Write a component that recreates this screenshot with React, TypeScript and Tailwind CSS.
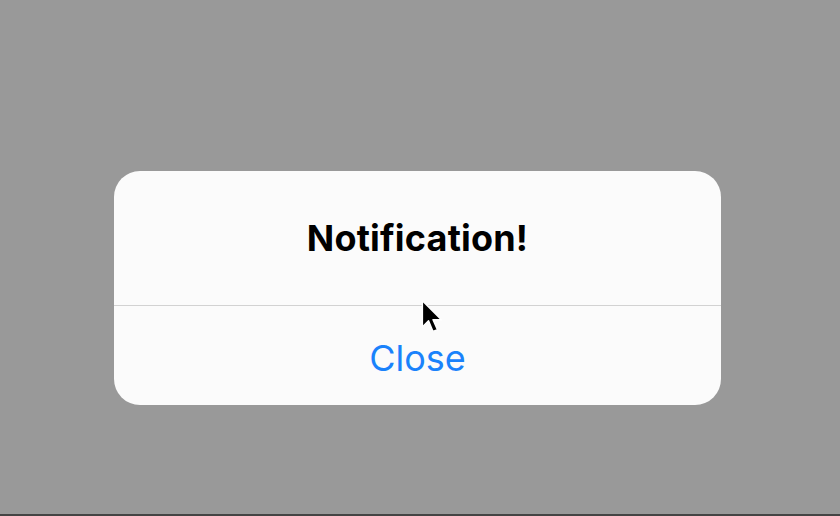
export default function App() {
  return (
    <div className="flex h-[516px] w-[840px] flex-col bg-[#999999] font-['Inter',sans-serif]">
      <div className="flex-1 pl-[114px] pt-[171px]">
        <div className="relative flex w-[607px] flex-col overflow-hidden rounded-[26px] bg-[#fbfbfb]">
          <div className="flex h-[134px] items-center justify-center">
            <h1 className="text-[36px] font-bold tracking-[0.2px] text-black">Notification!</h1>
          </div>
          <div className="h-px bg-[#d2d2d2]" />
          <button className="flex h-[99px] items-center justify-center pt-1 text-[36px] text-[#1a82fb]">
            Close
          </button>
        </div>
      </div>
      <div className="h-[2px] bg-[#444444]" />
      <svg
        className="absolute left-[420px] top-[299px]"
        width="26"
        height="38"
        viewBox="0 0 22 34"
      >
        <path
          d="M1.5 1.5 L1.5 25 L7 19.5 L11 29 L15 27.5 L11 18.5 L18.5 18.5 Z"
          fill="black"
          stroke="white"
          strokeWidth="1.3"
          strokeLinejoin="round"
        />
      </svg>
    </div>
  );
}
